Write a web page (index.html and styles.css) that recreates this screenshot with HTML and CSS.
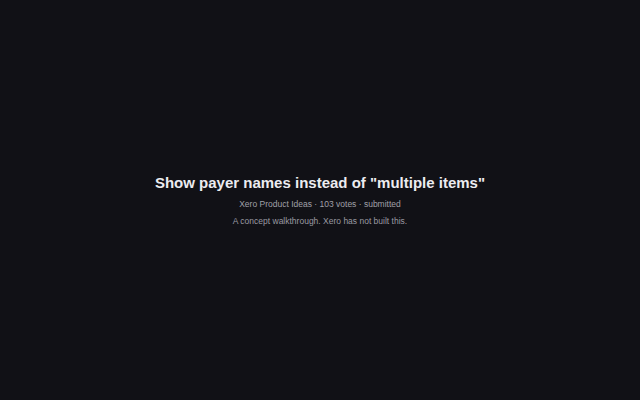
FILE: index.html
```html
<!DOCTYPE html>
<html lang="en">
<head>
    <meta charset="UTF-8">
    <meta name="viewport" content="width=device-width, initial-scale=1.0">
    <title>Show payer names instead of "multiple items"</title>
    <link rel="stylesheet" href="styles.css">
</head>
<body>

    <div class="portada">
        <div class="titulo">Show payer names instead of "multiple items"</div>
        <div class="meta">Xero Product Ideas · 103 votes · submitted</div>
        <div class="nota">A concept walkthrough. Xero has not built this.</div>
    </div>

</body>
</html>
```

FILE: styles.css
```css
body {
    font-family: "Liberation Sans", Arial, sans-serif;
    display: flex;
    justify-content: center;
    align-items: center;
    height: 100vh;
    background-color: #111116;
    margin: 0;
}

.portada {
    text-align: center;
}

.titulo {
    font-size: 15px;
    line-height: 17px;
    font-weight: bold;
    color: #ececf0;
    margin-bottom: 8px;
}

.meta {
    font-size: 8.5px;
    line-height: 10px;
    color: #a0a0a8;
    margin-bottom: 7px;
}

.nota {
    font-size: 8.5px;
    line-height: 10px;
    color: #9a9aa2;
}
```
